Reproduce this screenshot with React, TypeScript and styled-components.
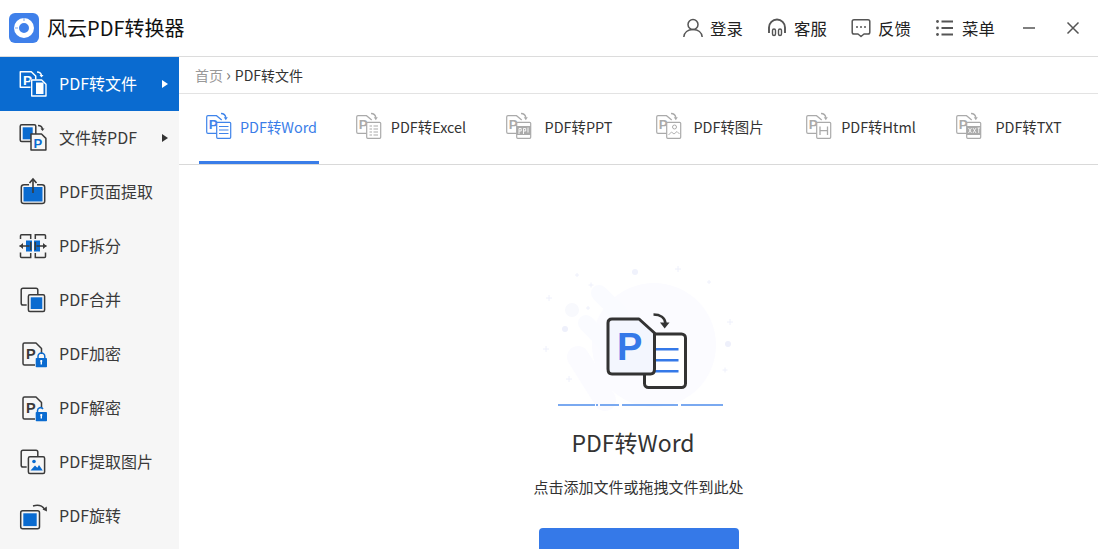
import React from "react";
import styled, { createGlobalStyle } from "styled-components";

const FONT = `"Noto Sans CJK SC", "Noto Sans", sans-serif`;
const SIDE_BLUE = "#0a6bd0";
const DARK = "#3a3a3a";

const Global = createGlobalStyle`
  html, body { margin: 0; padding: 0; background: #fff; overflow: hidden; }
  body { font-family: ${FONT}; }
`;

const Window = styled.div`
  width: 1098px;
  height: 549px;
  display: flex;
  flex-direction: column;
  overflow: hidden;
`;

const Header = styled.header`
  height: 56px;
  flex: none;
  display: flex;
  align-items: center;
  justify-content: space-between;
  padding: 0 18px 0 9px;
  border-bottom: 1px solid #dcdcdc;
`;

const Brand = styled.div`
  display: flex;
  align-items: center;
  gap: 8px;
  font-size: 20px;
  line-height: 30px;
  color: #111;
`;

const HeaderRight = styled.div`
  display: flex;
  align-items: center;
`;

const HeaderItem = styled.div<{ $width?: number }>`
  width: ${(p) => p.$width ?? 84}px;
  display: flex;
  align-items: center;
  gap: 7px;
  font-size: 16.4px;
  white-space: nowrap;
  color: #222;
`;

const WinButton = styled.div<{ $gap: number }>`
  display: flex;
  margin-left: ${(p) => p.$gap}px;
`;

const Body = styled.div`
  flex: 1;
  display: flex;
  min-height: 0;
`;

const Sidebar = styled.nav`
  width: 179px;
  flex: none;
  background: #f6f6f6;
`;

const SideItem = styled.div<{ $active?: boolean }>`
  height: 54px;
  display: flex;
  align-items: center;
  gap: 11px;
  padding: 0 11px 0 18px;
  font-size: 16px;
  color: ${(p) => (p.$active ? "#fff" : DARK)};
  background: ${(p) => (p.$active ? SIDE_BLUE : "transparent")};
`;

const SideLabel = styled.span`
  padding-bottom: 2px;
`;

const Caret = styled.span<{ $active?: boolean }>`
  margin-left: auto;
  width: 0;
  height: 0;
  border-left: 6px solid ${(p) => (p.$active ? "#fff" : "#333")};
  border-top: 4px solid transparent;
  border-bottom: 4px solid transparent;
`;

const Main = styled.main`
  flex: 1;
  min-width: 0;
  display: flex;
  flex-direction: column;
`;

const Breadcrumb = styled.div`
  height: 36px;
  flex: none;
  display: flex;
  align-items: center;
  padding-left: 16px;
  font-size: 14px;
  color: #999;
  border-bottom: 1px solid #e3e3e3;
`;

const Sep = styled.span`
  margin: 0 4px 2px 3px;
  color: #777;
  font-size: 16px;
  line-height: 16px;
`;

const Current = styled.span`
  color: #333;
`;

const Tabs = styled.div`
  height: 70px;
  flex: none;
  display: flex;
  gap: 30px;
  padding-left: 20px;
  border-bottom: 1px solid #d9d9d9;
`;

const Tab = styled.div<{ $active?: boolean }>`
  width: 120px;
  box-sizing: border-box;
  display: flex;
  align-items: center;
  padding: 0 0 3px 7px;
  font-size: 14.4px;
  color: ${(p) => (p.$active ? "#3a7de8" : "#333")};
  border-bottom: 3px solid ${(p) => (p.$active ? "#3a7de8" : "transparent")};
`;

const TabLabel = styled.span`
  flex: none;
  width: 93px;
  text-align: center;
  white-space: nowrap;
`;

const Drop = styled.section`
  flex: 1;
  display: flex;
  flex-direction: column;
  align-items: center;
  padding-top: 95px;
`;

const Title = styled.h2`
  margin: 8px 11px 0 0;
  font-size: 23px;
  line-height: 38px;
  font-weight: 400;
  color: #333;
`;

const Hint = styled.p`
  margin: 14px 0 0;
  font-size: 15px;
  line-height: 24px;
  color: #333;
`;

const AddButton = styled.button`
  flex: none;
  width: 200px;
  height: 50px;
  margin-top: 29px;
  border: 0;
  border-radius: 4px;
  background: #3579e8;
`;

const Icon = styled.svg`
  flex: none;
  display: block;
`;

const IllustrationBox = styled.div`
  margin-left: -8px;
`;

const Arrow = ({ c, d, head }: { c: string; d: string; head: string }) => (
  <>
    <path d={d} fill="none" stroke={c} strokeWidth="1.4" />
    <path d={head} fill={c} />
  </>
);

const PLetter = ({ x, y, size, c }: { x: number; y: number; size: number; c: string }) => (
  <text x={x} y={y} fontSize={size} fontWeight="700" fill={c} fontFamily="'Liberation Sans', sans-serif">
    P
  </text>
);

/* ---- sidebar icons, drawn on a 30x30 box ---- */

const ConvertIcon = () => (
  <Icon width="30" height="30" viewBox="0 0 30 30">
    <path d="M2.3 2.7h11l4.4 4.3v11.3H2.3z" fill="none" stroke="#fff" strokeWidth="1.5" strokeLinejoin="round" />
    <PLetter x={5} y={16} size={13.5} c="#fff" />
    <rect x="12.5" y="10.5" width="16.5" height="18" fill={SIDE_BLUE} />
    <path d="M13.7 11h10l4.3 4.3V27H13.7z" fill="none" stroke="#fff" strokeWidth="1.4" strokeLinejoin="round" />
    <rect x="18" y="13.5" width="7.5" height="11.5" fill="#fff" />
    <Arrow c="#fff" d="M19 3c2.5 0 4 1 4.5 3.500" head="M21.500 6h4l-2 2.500z" />
  </Icon>
);

const ToPdfIcon = () => (
  <Icon width="30" height="30" viewBox="0 0 30 30">
    <rect x="2.2" y="1.8" width="15.6" height="16.8" rx="1.5" fill="none" stroke={DARK} strokeWidth="1.5" />
    <rect x="4.7" y="4.3" width="10" height="12" fill={SIDE_BLUE} />
    <path d="M13 11h10.5l4.4 4.4v11.5H13z" fill="#f6f6f6" stroke={DARK} strokeWidth="1.5" strokeLinejoin="round" />
    <PLetter x={15.5} y={24.5} size={13} c={SIDE_BLUE} />
    <Arrow c={DARK} d="M20 2.5c2.5 0 4 1 4.5 3.5" head="M22.5 5.5h4l-2 2.5z" />
  </Icon>
);

const ExtractIcon = () => (
  <Icon width="30" height="30" viewBox="0 0 30 30">
    <path d="M11 7.7H6q-2.700 0-2.700 2.500v14q0 2.300 2.700 2.300h18q2.700 0 2.700-2.300v-14q0-2.500-2.700-2.500h-5" fill="none" stroke={DARK} strokeWidth="1.5" />
    <rect x="5.5" y="10" width="19" height="14.5" fill={SIDE_BLUE} />
    <path d="M15 16V2.5" stroke={DARK} strokeWidth="1.6" />
    <path d="M11.5 6 15 2l3.5 4" fill="none" stroke={DARK} strokeWidth="1.6" />
  </Icon>
);

const SplitIcon = () => (
  <Icon width="30" height="30" viewBox="0 0 30 30">
    <path d="M12.7 8V3.7H3.5q-1 0-1 1V8M2.5 21.5v4q0 1 1 1h9.200v-4.500" fill="none" stroke={DARK} strokeWidth="1.5" />
    <path d="M17.3 8V3.7h9.200q1 0 1 1V8M27.5 21.5v4q0 1-1 1h-9.200v-4.500" fill="none" stroke={DARK} strokeWidth="1.5" />
    <rect x="8" y="9.5" width="6" height="11" fill={SIDE_BLUE} />
    <rect x="16" y="9.5" width="6" height="11" fill={SIDE_BLUE} />
    <path d="M1.5 15h10M18.5 15h10" stroke={DARK} strokeWidth="1.5" />
    <path d="M5 12v6l-3.5-3zM25 12v6l3.5-3z" fill={DARK} />
    <path d="M12.7 11v8M17.3 11v8" stroke={DARK} strokeWidth="1.5" />
  </Icon>
);

const MergeIcon = () => (
  <Icon width="30" height="30" viewBox="0 0 30 30">
    <path d="M8.7 20H5q-1.800 0-1.800-1.800V5q0-1.800 1.800-1.800h13q1.800 0 1.800 1.800v4" fill="none" stroke={DARK} strokeWidth="1.5" />
    <rect x="10.4" y="9.7" width="16.2" height="16.9" rx="1.5" fill="#f6f6f6" stroke={DARK} strokeWidth="1.5" />
    <rect x="12.7" y="12.3" width="11.6" height="11.7" fill={SIDE_BLUE} />
  </Icon>
);

const LockedDoc = ({ open }: { open?: boolean }) => (
  <Icon width="30" height="30" viewBox="0 0 30 30">
    <path d="M17 26H6.5Q5 26 5 24.5v-19Q5 4 6.5 4H18l5.5 5.500V15" fill="none" stroke={DARK} strokeWidth="1.5" strokeLinejoin="round" />
    <PLetter x={8} y={19.5} size={14.5} c={DARK} />
    {open ? (
      <path d="M19.5 19v-1.5a3 3 0 0 1 5.500-1.500" fill="none" stroke={SIDE_BLUE} strokeWidth="1.5" />
    ) : (
      <path d="M20 19v-1.5a3.400 3.400 0 0 1 6.800 0V19" fill="none" stroke={SIDE_BLUE} strokeWidth="1.5" />
    )}
    <rect x="17.7" y="19" width="11.3" height="9.3" rx="0.8" fill={SIDE_BLUE} />
    <path d="M23.3 21.5v4" stroke="#fff" strokeWidth="1.4" />
    <circle cx="23.3" cy="22" r="1.1" fill="#fff" />
  </Icon>
);

const ImageIcon = () => (
  <Icon width="30" height="30" viewBox="0 0 30 30">
    <path d="M8.7 20H5q-1.800 0-1.800-1.800V5q0-1.800 1.800-1.800h13q1.800 0 1.800 1.800v4" fill="none" stroke={DARK} strokeWidth="1.5" />
    <rect x="10.4" y="9.7" width="16.2" height="16.9" rx="1.5" fill="#f6f6f6" stroke={DARK} strokeWidth="1.5" />
    <circle cx="16" cy="14.5" r="1.8" fill={SIDE_BLUE} />
    <path d="M12.5 23.5l4.500-5 2.300 2.300 1.700-2.800 3.800 5.500z" fill={SIDE_BLUE} />
  </Icon>
);

const RotateIcon = () => (
  <Icon width="30" height="30" viewBox="0 0 30 30">
    <rect x="2.7" y="9.7" width="18.8" height="18" rx="2" fill="none" stroke={DARK} strokeWidth="1.5" />
    <rect x="5.3" y="12.3" width="13.4" height="12.8" fill={SIDE_BLUE} />
    <path d="M15 5c5-1.500 9-.5 11.500 3" fill="none" stroke={DARK} strokeWidth="1.4" />
    <path d="M24.5 8.5 29 10.5l-.3-5z" fill={DARK} />
  </Icon>
);

/* ---- tab icons, 26x28 box ---- */

type TabInner = "word" | "excel" | "ppt" | "image" | "html" | "txt";

const TabIcon = ({ kind, c }: { kind: TabInner; c: string }) => (
  <Icon width="26" height="28" viewBox="0 0 26 28">
    <path d="M10.5 21.3H2q-1.300 0-1.300-1.300V5q0-1.300 1.300-1.300h8.500L15.700 8" fill="none" stroke={c} strokeWidth="1.2" />
    <PLetter x={2.8} y={17} size={13.5} c={c} />
    <rect x="10.7" y="10.3" width="14" height="16" rx="1" fill="#fff" stroke={c} strokeWidth="1.2" />
    <Arrow c={c} d="M15 1.5c3 0 4.500 1.500 4.800 4.200" head="M17.8 5.2h4l-2 3z" />
    {kind === "word" && <path d="M13 14.5h9.500M13 18h9.500M13 21.5h9.500" stroke={c} strokeWidth="1.2" />}
    {kind === "excel" && (
      <path d="M13.5 14H16M17.5 14H22M13.5 17H16M17.5 17H22M13.5 20H16M17.5 20H22M13.5 23H16M17.5 23H22" stroke={c} strokeWidth="1.2" />
    )}
    {kind === "ppt" && (
      <>
        <rect x="10.7" y="14" width="14" height="9" fill={c} />
        <path d="M13 16.5V22M13 16.5h2.200V19H13M17.5 16.5V22M17.5 16.5h2.200V19h-2.200M22 15.5v5" fill="none" stroke="#fff" strokeWidth="0.9" />
      </>
    )}
    {kind === "image" && (
      <>
        <circle cx="18.5" cy="15" r="2" fill="none" stroke={c} strokeWidth="1" />
        <path d="M12.5 23l3-3 2.500 2 3-2.500 2.500 2.500" fill="none" stroke={c} strokeWidth="0.9" />
      </>
    )}
    {kind === "html" && <path d="M14 14.5V23M21.5 14.5V23M14 18.7h7.500" fill="none" stroke={c} strokeWidth="1.3" />}
    {kind === "txt" && (
      <>
        <rect x="10.7" y="14" width="14" height="9" fill={c} />
        <path d="M12.5 16l3 5M15.5 16l-3 5M17 16l3 5M20 16l-3 5M21.5 16H24M22.7 16v5" fill="none" stroke="#fff" strokeWidth="0.8" />
      </>
    )}
  </Icon>
);

/* ---- header icons ---- */

const Logo = () => (
  <Icon width="30" height="30" viewBox="0 0 30 30">
    <rect width="30" height="30" rx="6" fill="#3f80ea" />
    <circle cx="15" cy="15" r="7.5" fill="none" stroke="#fff" strokeWidth="5" />
    <path d="M15 5v3M6 15H9" stroke="#3f80ea" strokeWidth="0.7" />
  </Icon>
);

const UserIcon = () => (
  <Icon width="20" height="20" viewBox="0 0 20 20">
    <circle cx="10" cy="6.5" r="5" fill="none" stroke="#555" strokeWidth="1.5" />
    <path d="M.8 19c.4-4.500 4-7.500 9.200-7.500s8.800 3 9.200 7.500" fill="none" stroke="#555" strokeWidth="1.5" />
  </Icon>
);

const HeadsetIcon = () => (
  <Icon width="20" height="20" viewBox="0 0 20 20">
    <path d="M2 15V9.5a8 8 0 0 1 16 0V15" fill="none" stroke="#555" strokeWidth="1.9" />
    <rect x="5.5" y="11" width="3" height="6.5" rx="1.5" fill="none" stroke="#555" strokeWidth="1.4" />
    <rect x="11.5" y="11" width="3" height="6.5" rx="1.5" fill="none" stroke="#555" strokeWidth="1.4" />
  </Icon>
);

const ChatIcon = () => (
  <Icon width="20" height="20" viewBox="0 0 20 20">
    <path d="M3 1.8h14q1.800 0 1.800 1.800v10.600q0 1.800-1.800 1.800h-4l-3 2.500-3-2.500H3q-1.800 0-1.800-1.800V3.600Q1.200 1.800 3 1.800z" fill="none" stroke="#555" strokeWidth="1.5" strokeLinejoin="round" />
    <circle cx="6" cy="9" r="1" fill="#555" />
    <circle cx="10" cy="9" r="1" fill="#555" />
    <circle cx="14" cy="9" r="1" fill="#555" />
  </Icon>
);

const ListIcon = () => (
  <Icon width="20" height="20" viewBox="0 0 20 20">
    <path d="M6.5 3.5H18M6.5 10H18M6.5 16.5H18" stroke="#555" strokeWidth="1.8" />
    <circle cx="2.5" cy="3.5" r="1.4" fill="#555" />
    <circle cx="2.5" cy="10" r="1.4" fill="#555" />
    <circle cx="2.5" cy="16.5" r="1.4" fill="#555" />
  </Icon>
);

/* ---- big illustration ---- */

const pluses: [number, number, number][] = [
  [148, 9, 3], [47, 15, 2], [61, 25, 2.5], [19, 38, 3], [179, 22, 2],
  [200, 62, 3], [16, 89, 3], [195, 110, 2.5], [39, 119, 3], [58, 48, 2],
];

const Illustration = () => (
  <Icon width="210" height="155" viewBox="0 0 210 155">
    <circle cx="124" cy="85" r="62" fill="#fbfbff" />
    <path d="M69 33 90 54" stroke="#fafbff" strokeWidth="16" strokeLinecap="round" />
    <path d="M56 63 78 86" stroke="#fafbff" strokeWidth="16" strokeLinecap="round" />
    <path d="M48 97 75 140" stroke="#fbfbff" strokeWidth="22" strokeLinecap="round" />
    <circle cx="105" cy="12" r="3" fill="#f0f2fc" />
    <circle cx="42" cy="50" r="7" fill="#f8f9fd" />
    <circle cx="35" cy="69" r="3" fill="#eef0fb" />
    <circle cx="198" cy="84" r="3" fill="#eef0fb" />
    {pluses.map(([x, y, s]) => (
      <path key={`${x}-${y}`} d={`M${x - s} ${y}h${s * 2}M${x} ${y - s}v${s * 2}`} stroke="#eef0fb" strokeWidth="1" />
    ))}
    <rect x="114.5" y="74" width="41" height="53.5" rx="4" fill="#fff" stroke="#333" strokeWidth="3" />
    <path d="M125 89.3h23.500M125 100.3h23.500M125 111.3h23.500" stroke="#3579e8" strokeWidth="2.4" />
    <path d="M82 59h27l15.500 14v36q0 5-4 5H82q-4 0-4-5V63q0-4 4-4z" fill="#f3f6fe" stroke="#333" strokeWidth="3" strokeLinejoin="round" />
    <text x="87" y="100" fontSize="38" fontWeight="700" fill="#3579e8" fontFamily="'Liberation Sans', sans-serif">
      P
    </text>
    <path d="M123.5 54.5c6.500 0 11.500 3 12 9" fill="none" stroke="#333" strokeWidth="2.6" />
    <path d="M130 62.5h9.500l-4.800 6z" fill="#333" />
    <path d="M28 145h37M66 145h2M70 145h19M92 145h56M151 145h42" stroke="#7aa9f0" strokeWidth="2" />
  </Icon>
);

const sideItems: { label: string; icon: React.ReactNode; caret?: boolean; active?: boolean }[] = [
  { label: "PDF转文件", icon: <ConvertIcon />, caret: true, active: true },
  { label: "文件转PDF", icon: <ToPdfIcon />, caret: true },
  { label: "PDF页面提取", icon: <ExtractIcon /> },
  { label: "PDF拆分", icon: <SplitIcon /> },
  { label: "PDF合并", icon: <MergeIcon /> },
  { label: "PDF加密", icon: <LockedDoc /> },
  { label: "PDF解密", icon: <LockedDoc open /> },
  { label: "PDF提取图片", icon: <ImageIcon /> },
  { label: "PDF旋转", icon: <RotateIcon /> },
];

const tabs: { label: string; kind: TabInner }[] = [
  { label: "PDF转Word", kind: "word" },
  { label: "PDF转Excel", kind: "excel" },
  { label: "PDF转PPT", kind: "ppt" },
  { label: "PDF转图片", kind: "image" },
  { label: "PDF转Html", kind: "html" },
  { label: "PDF转TXT", kind: "txt" },
];

export default function App() {
  return (
    <Window>
      <Global />
      <Header>
        <Brand>
          <Logo />
          风云PDF转换器
        </Brand>
        <HeaderRight>
          <HeaderItem><UserIcon />登录</HeaderItem>
          <HeaderItem><HeadsetIcon />客服</HeaderItem>
          <HeaderItem><ChatIcon />反馈</HeaderItem>
          <HeaderItem $width={60}><ListIcon />菜单</HeaderItem>
          <WinButton $gap={27}>
            <Icon width="14" height="14" viewBox="0 0 14 14">
              <path d="M1 7h12" stroke="#555" strokeWidth="1.5" />
            </Icon>
          </WinButton>
          <WinButton $gap={30}>
            <Icon width="14" height="14" viewBox="0 0 14 14">
              <path d="M1.5 1.5l11 11M12.5 1.5l-11 11" stroke="#555" strokeWidth="1.5" />
            </Icon>
          </WinButton>
        </HeaderRight>
      </Header>
      <Body>
        <Sidebar>
          {sideItems.map((item) => (
            <SideItem key={item.label} $active={item.active}>
              {item.icon}
              <SideLabel>{item.label}</SideLabel>
              {item.caret && <Caret $active={item.active} />}
            </SideItem>
          ))}
        </Sidebar>
        <Main>
          <Breadcrumb>
            首页<Sep>›</Sep><Current>PDF转文件</Current>
          </Breadcrumb>
          <Tabs>
            {tabs.map((t, i) => (
              <Tab key={t.kind} $active={i === 0}>
                <TabIcon kind={t.kind} c={i === 0 ? "#3f84ea" : "#aaa"} />
                <TabLabel>{t.label}</TabLabel>
              </Tab>
            ))}
          </Tabs>
          <Drop>
            <IllustrationBox>
              <Illustration />
            </IllustrationBox>
            <Title>PDF转Word</Title>
            <Hint>点击添加文件或拖拽文件到此处</Hint>
            <AddButton />
          </Drop>
        </Main>
      </Body>
    </Window>
  );
}
